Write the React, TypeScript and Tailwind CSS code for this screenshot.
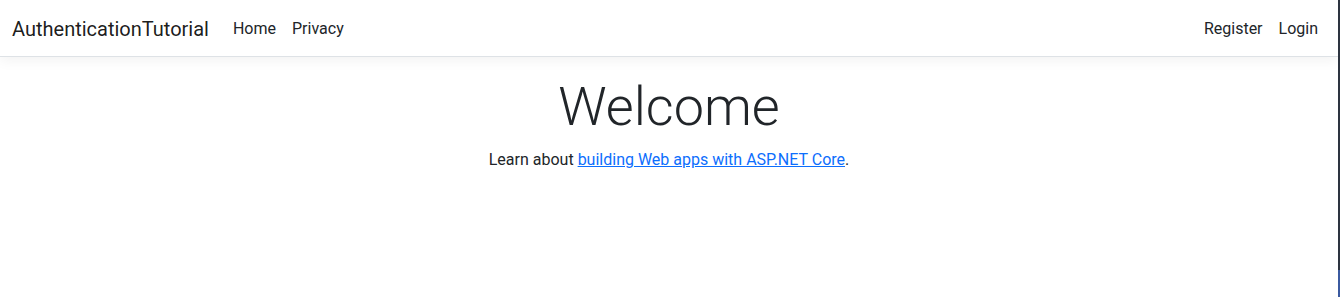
import React from "react";

const font = { fontFamily: '"Segoe UI", Roboto, "Noto Sans", "Liberation Sans", sans-serif' };

const NavLink: React.FC<{ label: string }> = ({ label }) => (
  <a href="#" className="px-2 py-2 text-base leading-6 text-[#212529] no-underline">
    {label}
  </a>
);

const App: React.FC = () => {
  return (
    <div className="flex h-[297px] w-full bg-white" style={font}>
      <div className="flex min-w-0 flex-1 flex-col">
        <header>
          <nav className="flex h-[57px] items-center border-b border-[#dee2e6] bg-white px-3 pt-[2px] shadow-[0_4px_12px_rgba(0,0,0,0.05)]">
            <a href="#" className="mr-4 py-[5px] text-xl leading-[30px] text-[rgba(0,0,0,0.9)]">
              AuthenticationTutorial
            </a>
            <div className="flex flex-1 items-center">
              <NavLink label="Home" />
              <NavLink label="Privacy" />
            </div>
            <div className="flex items-center">
              <NavLink label="Register" />
              <NavLink label="Login" />
            </div>
          </nav>
        </header>
        <main className="mt-[18px] px-3 pb-4">
          <div className="text-center text-[#212529]">
            <h1 className="mb-2 text-[54px] font-light leading-[1.2]">Welcome</h1>
            <p className="text-base leading-6">
              Learn about{" "}
              <a href="#" className="text-[#0d6efd] underline">
                building Web apps with ASP.NET Core
              </a>
              .
            </p>
          </div>
        </main>
      </div>
      {/* window edge */}
      <div className="flex w-[2px] flex-col bg-[#2d3440]">
        <div className="flex-1" />
        <div className="h-[27px] bg-[#3b5aa0]" />
      </div>
    </div>
  );
};

export default App;
